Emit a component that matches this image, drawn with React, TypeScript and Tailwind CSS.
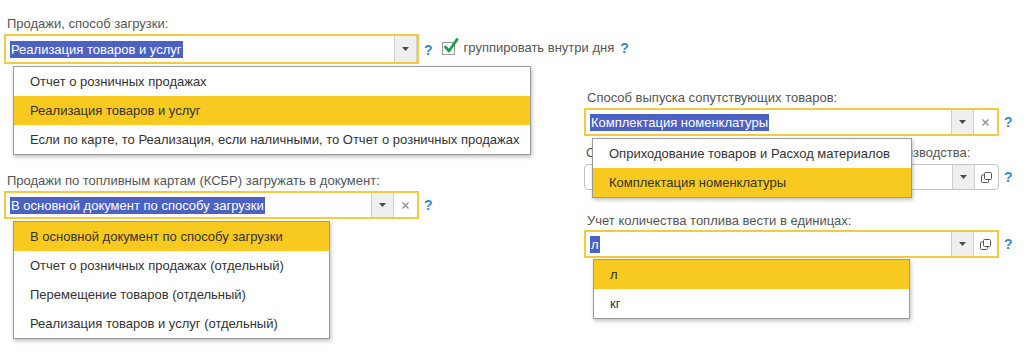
import React from "react";

const Help = ({ className = "" }: { className?: string }) => (
  <span className={`text-[#2f8ad3] font-bold text-[14px] leading-none ${className}`}>?</span>
);

const DropBtn = () => (
  <div className="w-[23px] h-full bg-[#efefef] border-l border-r border-[#cfcfcf] flex items-center justify-center shrink-0">
    <svg width="7" height="4" viewBox="0 0 7 4">
      <path d="M0 0 L7 0 L3.5 4 Z" fill="#4a4a4a" />
    </svg>
  </div>
);

const ClearBtn = () => (
  <div className="w-[23px] h-full flex items-center justify-center shrink-0">
    <svg width="7" height="7" viewBox="0 0 7 7">
      <path d="M0.5 0.5 L6.5 6.5 M6.5 0.5 L0.5 6.5" stroke="#8a8a8a" strokeWidth="1.2" />
    </svg>
  </div>
);

const OpenBtn = () => (
  <div className="w-[23px] h-full flex items-center justify-center shrink-0">
    <svg width="11" height="11" viewBox="0 0 11 11" fill="none">
      <rect x="3.5" y="0.5" width="7" height="7" rx="1" stroke="#555" />
      <path d="M3.5 3 H1.5 a1 1 0 0 0 -1 1 V9.5 a1 1 0 0 0 1 1 H6.5 a1 1 0 0 0 1 -1 V7.5" stroke="#555" />
    </svg>
  </div>
);

const Selected = ({ text }: { text: string }) => (
  <span className="bg-[#4c61c4] text-white leading-[17px] px-[1px]">{text}</span>
);

const Popup = ({
  items,
  active,
  className,
}: {
  items: string[];
  active: number;
  className: string;
}) => (
  <div
    className={`absolute z-10 bg-white border border-[#9a9a9a] shadow-[1px_2px_4px_rgba(0,0,0,0.25)] ${className}`}
  >
    {items.map((it, i) => (
      <div
        key={i}
        className={`h-[29px] flex items-center pl-[16px] pr-[12px] whitespace-nowrap text-[#333] ${
          i === active ? "bg-[#f8c91f]" : ""
        }`}
      >
        {it}
      </div>
    ))}
  </div>
);

export default function App() {
  return (
    <div
      className="w-[1029px] h-[362px] bg-white overflow-hidden relative text-[13px] text-[#444]"
      style={{ fontFamily: '"Liberation Sans", Arial, sans-serif' }}
    >
      {/* Row A */}
      <div className="pl-[4px] pt-[17px]">
        <div className="h-[14px] leading-[14px] pl-[3px] text-[#555]">Продажи, способ загрузки:</div>
        <div className="flex items-center mt-[3px]">
          <div className="relative">
            <div className="w-[415px] h-[30px] border-2 border-[#f4cb3f] bg-white flex items-center">
              <div className="flex-1 pl-[4px] flex items-center">
                <Selected text="Реализация товаров и услуг" />
              </div>
              <DropBtn />
            </div>
            <Popup
              className="left-[9px] top-[32px] w-[518px]"
              active={1}
              items={[
                "Отчет о розничных продажах",
                "Реализация товаров и услуг",
                "Если по карте, то Реализация, если наличными, то Отчет о розничных продажах",
              ]}
            />
          </div>
          <Help className="ml-[5px] mt-[2px]" />
          <div className="ml-[9px] w-[13px] h-[13px] border border-[#9c9c9c] bg-white relative mt-[-2px]">
            <svg className="absolute left-[1px] top-[-5px]" width="15" height="16" viewBox="0 0 15 16">
              <path d="M1.5 9 L5 13 L13 1.5" stroke="#1aa34a" strokeWidth="2.8" fill="none" strokeLinecap="round" strokeLinejoin="round" />
            </svg>
          </div>
          <span className="ml-[9px] text-[#555] mt-[-3px]">группировать внутри дня</span>
          <Help className="ml-[6px] mt-[-3px]" />
        </div>
      </div>

      {/* Row B */}
      <div className="flex">
        {/* left column */}
        <div className="pl-[4px] pt-[110px] w-[584px] shrink-0">
          <div className="h-[14px] leading-[14px] pl-[3px] text-[#555]">
            Продажи по топливным картам (КСБР) загружать в документ:
          </div>
          <div className="flex items-center mt-[3px]">
            <div className="relative">
              <div className="w-[415px] h-[28px] border-2 border-[#f4cb3f] bg-white flex items-center">
                <div className="flex-1 pl-[4px] flex items-center">
                  <Selected text="В основной документ по способу загрузки" />
                </div>
                <DropBtn />
                <ClearBtn />
              </div>
              <Popup
                className="left-[9px] top-[30px] w-[317px]"
                active={0}
                items={[
                  "В основной документ по способу загрузки",
                  "Отчет о розничных продажах (отдельный)",
                  "Перемещение товаров (отдельный)",
                  "Реализация товаров и услуг (отдельный)",
                ]}
              />
            </div>
            <Help className="ml-[5px]" />
          </div>
        </div>

        {/* right column */}
        <div className="pt-[27px]">
          <div className="h-[14px] leading-[14px] pl-[3px] text-[#555]">
            Способ выпуска сопутствующих товаров:
          </div>
          <div className="flex items-center mt-[3px]">
            <div className="relative">
              <div className="w-[415px] h-[28px] border-2 border-[#f4cb3f] bg-white flex items-center">
                <div className="flex-1 pl-[4px] flex items-center">
                  <Selected text="Комплектация номенклатуры" />
                </div>
                <DropBtn />
                <ClearBtn />
              </div>
              <Popup
                className="left-[8px] top-[30px] w-[320px]"
                active={1}
                items={["Оприходование товаров и Расход материалов", "Комплектация номенклатуры"]}
              />
            </div>
            <Help className="ml-[5px]" />
          </div>

          <div className="h-[14px] leading-[14px] pl-[2px] mt-[10px] text-[#555] whitespace-nowrap">
            Способ отражения расходов по материалам для производства:
          </div>
          <div className="flex items-center mt-[4px]">
            <div className="w-[415px] h-[26px] border border-[#c4c4c4] rounded-[4px] bg-white flex items-center">
              <div className="flex-1" />
              <DropBtn />
              <OpenBtn />
            </div>
            <Help className="ml-[5px]" />
          </div>

          <div className="h-[14px] leading-[14px] pl-[3px] mt-[24px] text-[#555]">
            Учет количества топлива вести в единицах:
          </div>
          <div className="flex items-center mt-[2px]">
            <div className="relative">
              <div className="w-[415px] h-[28px] border-2 border-[#f4cb3f] bg-white flex items-center">
                <div className="flex-1 pl-[4px] flex items-center">
                  <Selected text="л" />
                </div>
                <DropBtn />
                <OpenBtn />
              </div>
              <Popup className="left-[9px] top-[29px] w-[317px]" active={0} items={["л", "кг"]} />
            </div>
            <Help className="ml-[5px]" />
          </div>
        </div>
      </div>
    </div>
  );
}
